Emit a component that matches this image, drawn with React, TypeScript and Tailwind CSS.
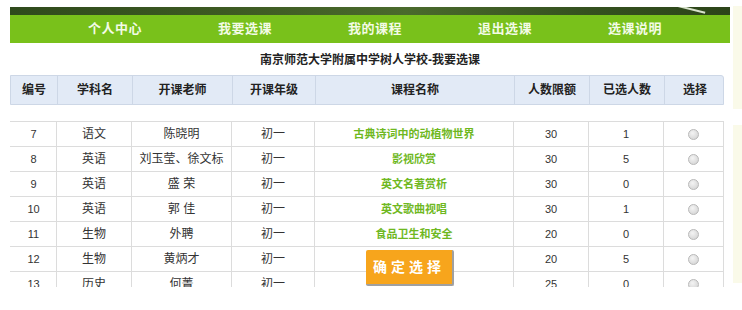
import React from "react";

const navItems = ["个人中心", "我要选课", "我的课程", "退出选课", "选课说明"];

const cols = [
  { label: "编号", w: "w-[47px]" },
  { label: "学科名", w: "w-[75px]" },
  { label: "开课老师", w: "w-[100px]" },
  { label: "开课年级", w: "w-[83px]" },
  { label: "课程名称", w: "w-[199px]" },
  { label: "人数限额", w: "w-[75px]" },
  { label: "已选人数", w: "w-[75px]" },
  { label: "选择", w: "w-[60px]" },
];

const rows = [
  { id: 7, subject: "语文", teacher: "陈晓明", grade: "初一", course: "古典诗词中的动植物世界", limit: 30, picked: 1 },
  { id: 8, subject: "英语", teacher: "刘玉莹、徐文标", grade: "初一", course: "影视欣赏", limit: 30, picked: 5 },
  { id: 9, subject: "英语", teacher: "盛 荣", grade: "初一", course: "英文名著赏析", limit: 30, picked: 0 },
  { id: 10, subject: "英语", teacher: "郭 佳", grade: "初一", course: "英文歌曲视唱", limit: 30, picked: 1 },
  { id: 11, subject: "生物", teacher: "外聘", grade: "初一", course: "食品卫生和安全", limit: 20, picked: 0 },
  { id: 12, subject: "生物", teacher: "黄炳才", grade: "初一", course: "", limit: 20, picked: 5 },
  { id: 13, subject: "历史", teacher: "何菁", grade: "初一", course: "", limit: 25, picked: 0 },
];

function Radio() {
  return (
    <span className="inline-block w-[11px] h-[11px] rounded-full border border-[#b8b8b8] bg-[radial-gradient(circle_at_40%_35%,#f4f4f4,#cfcfcf)]" />
  );
}

export default function App() {
  return (
    <div
      className="w-[742px] h-[310px] bg-white overflow-hidden flex text-[#333]"
      style={{ fontFamily: '"Liberation Sans", "Noto Sans CJK SC", sans-serif' }}
    >
      <div className="w-[10px] shrink-0" />

      {/* Main column */}
      <div className="w-[720px] shrink-0 flex flex-col relative">
        <div className="h-[7px]" />
        {/* Banner strip */}
        <div className="h-[8px] relative overflow-hidden bg-[linear-gradient(90deg,#2f4a1c,#3d5a22_30%,#4a6a2c_55%,#35511f_80%,#2c4419)]">
          <div className="absolute left-[668px] top-[-2px] w-[28px] h-[1.5px] bg-[#d8e2cc] rotate-[14deg] origin-left" />
        </div>
        {/* Nav */}
        <div className="h-[28px] bg-[#79c11b] flex items-center pl-[40px]">
          {navItems.map((n) => (
            <div key={n} className="w-[130px] text-center text-[13px] font-bold text-[#f3fbe6] tracking-[0.5px]">
              {n}
            </div>
          ))}
        </div>
        {/* Title */}
        <div className="h-[32px] flex items-center justify-center text-[12px] font-bold text-[#222] pt-[1px]">
          南京师范大学附属中学树人学校-我要选课
        </div>

        {/* Table header */}
        <div className="w-[714px] h-[30px] flex bg-[#e2eaf6] border border-[#cdd7e6] rounded-tr-[3px]">
          {cols.map((c, i) => (
            <div
              key={c.label}
              className={`${c.w} shrink-0 flex items-center justify-center text-[12px] font-bold text-[#222] ${
                i < cols.length - 1 ? "border-r border-[#cdd7e6]" : ""
              }`}
            >
              {c.label}
            </div>
          ))}
        </div>

        <div className="h-[16px]" />

        {/* Table body */}
        <div className="w-[714px] h-[166px] overflow-hidden border-t border-[#dcdcdc]">
          {rows.map((r) => (
            <div key={r.id} className="h-[25px] flex border-b border-[#dcdcdc] text-[11px]">
              <div className="w-[47px] shrink-0 flex items-center justify-center border-r border-l border-[#dcdcdc] border-l-transparent">{r.id}</div>
              <div className="w-[75px] shrink-0 flex items-center justify-center border-r border-[#dcdcdc] text-[12px]">{r.subject}</div>
              <div className="w-[100px] shrink-0 flex items-center justify-center border-r border-[#dcdcdc] text-[12px]">{r.teacher}</div>
              <div className="w-[83px] shrink-0 flex items-center justify-center border-r border-[#dcdcdc] text-[12px]">{r.grade}</div>
              <div className="w-[199px] shrink-0 flex items-center justify-center border-r border-[#dcdcdc] text-[11px] font-bold text-[#6fb81f]">{r.course}</div>
              <div className="w-[75px] shrink-0 flex items-center justify-center border-r border-[#dcdcdc]">{r.limit}</div>
              <div className="w-[75px] shrink-0 flex items-center justify-center border-r border-[#dcdcdc]">{r.picked}</div>
              <div className="w-[60px] shrink-0 flex items-center justify-center border-r border-[#dcdcdc]">
                <Radio />
              </div>
            </div>
          ))}
        </div>

        {/* Confirm button */}
        <button className="absolute left-[356px] top-[250px] w-[88px] h-[36px] bg-[#f7a51c] border-r-2 border-b-2 border-[#a0a0a0] rounded-[2px] text-white text-[14px] font-bold tracking-[4px] flex items-center justify-center">
          确定选择
        </button>
      </div>

      <div className="w-[3px] shrink-0" />

      {/* Right cream strip */}
      <div className="flex-1 flex flex-col">
        <div className="h-[6px]" />
        <div className="h-[103px] bg-[#fafae9]" />
        <div className="h-[16px]" />
        <div className="h-[158px] bg-[#fafae9]" />
      </div>
    </div>
  );
}
